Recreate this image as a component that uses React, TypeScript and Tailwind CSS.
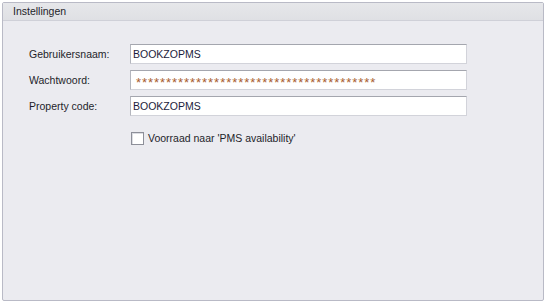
import React from "react";

const font = { fontFamily: '"Liberation Sans", Arial, sans-serif' };

function Field({ label, value, password }: { label: string; value: string; password?: boolean }) {
  return (
    <div className="flex items-center h-[20px]">
      <div className="w-[101px] text-[10.5px] text-[#1e1e2a] leading-none">{label}</div>
      <div className="w-[337px] h-[20px] bg-white border border-t-[#a4a6ae] border-l-[#b4b6be] border-r-[#d2d3da] border-b-[#d2d3da] flex items-center pl-[2px]">
        <span
          className={
            password
              ? "text-[13px] leading-none text-[#a8602e] tracking-[0.95px] pl-[3px] pt-[4px]"
              : "text-[10.5px] leading-none text-[#1c1c3c]"
          }
        >
          {value}
        </span>
      </div>
    </div>
  );
}

export default function App() {
  return (
    <div className="w-[546px] h-[304px] bg-white pt-[2px] pl-[2px]" style={font}>
      <div className="w-[542px] h-[299px] border border-[#b9bac6] rounded-[2px] bg-[#ebebf0] flex flex-col">
        <div className="h-[18px] bg-gradient-to-b from-[#e6e7ea] to-[#dfe0e4] border-b border-[#cfd0d8] flex items-center pl-[10px]">
          <span className="text-[10.5px] text-[#1e1e2a] leading-none">Instellingen</span>
        </div>
        <div className="pl-[26px] pt-[23px] flex flex-col gap-[6px]">
          <Field label="Gebruikersnaam:" value="BOOKZOPMS" />
          <Field label="Wachtwoord:" value={"*".repeat(40)} password />
          <Field label="Property code:" value="BOOKZOPMS" />
          <div className="flex items-center pl-[102px] mt-[10px]">
            <div className="w-[13px] h-[13px] bg-white border border-[#8d8f99] shadow-[inset_1px_1px_0_#dcdde3]" />
            <span className="ml-[4px] text-[10.5px] text-[#1e1e2a] leading-none">Voorraad naar 'PMS availability'</span>
          </div>
        </div>
      </div>
    </div>
  );
}
